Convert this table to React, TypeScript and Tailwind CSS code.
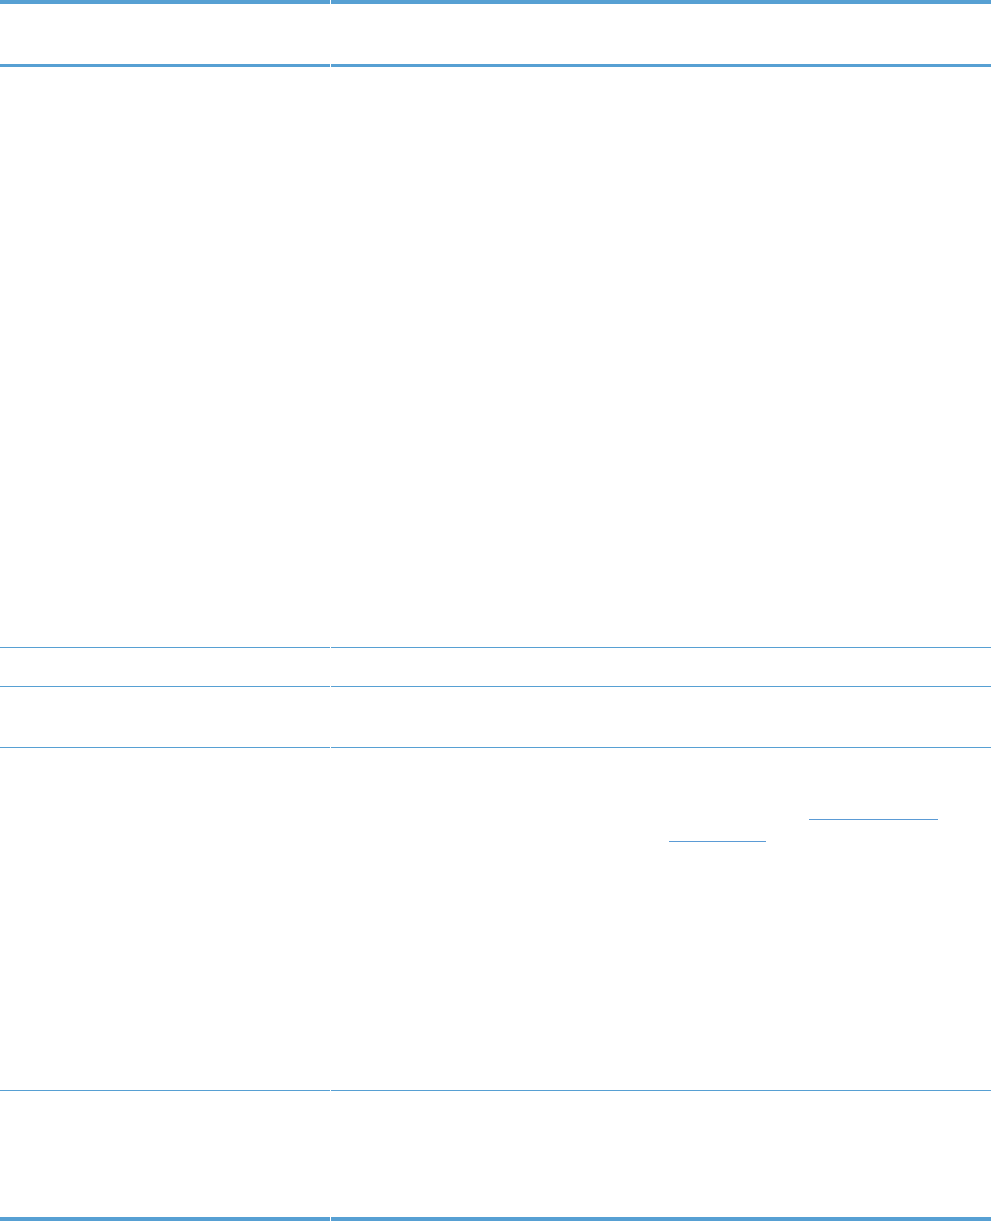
import React from "react";

const rows = [
  { h: "h-[581px]", border: "border-b" },
  { h: "h-[39px]", border: "border-b" },
  { h: "h-[61px]", border: "border-b" },
];

const Cell = ({ className = "", children }: { className?: string; children?: React.ReactNode }) => (
  <div className={`border-[#57a0d3] ${className}`}>{children}</div>
);

export default function App() {
  return (
    <div className="w-[992px] h-[1221px] bg-white font-['Liberation_Sans',sans-serif]">
      <div className="grid w-[991px] grid-cols-[330px_660px] gap-x-px">
        {/* header row */}
        <Cell className="h-[67px] border-t-4 border-b-[3px]" />
        <Cell className="h-[67px] border-t-4 border-b-[3px]" />

        {rows.map((r, i) => (
          <React.Fragment key={i}>
            <Cell className={`${r.h} ${r.border}`} />
            <Cell className={`${r.h} ${r.border}`} />
          </React.Fragment>
        ))}

        {/* row with links */}
        <Cell className="h-[343px] border-b" />
        <Cell className="h-[343px] border-b">
          <div className="pt-[71px]">
            <div className="ml-[478px] w-[129px] border-b border-[#5b9bd5]" />
            <div className="ml-[338px] mt-[21px] w-[97px] border-b border-[#5b9bd5]" />
          </div>
        </Cell>

        {/* last row */}
        <Cell className="h-[130px] border-b-4" />
        <Cell className="h-[130px] border-b-4" />
      </div>
    </div>
  );
}
